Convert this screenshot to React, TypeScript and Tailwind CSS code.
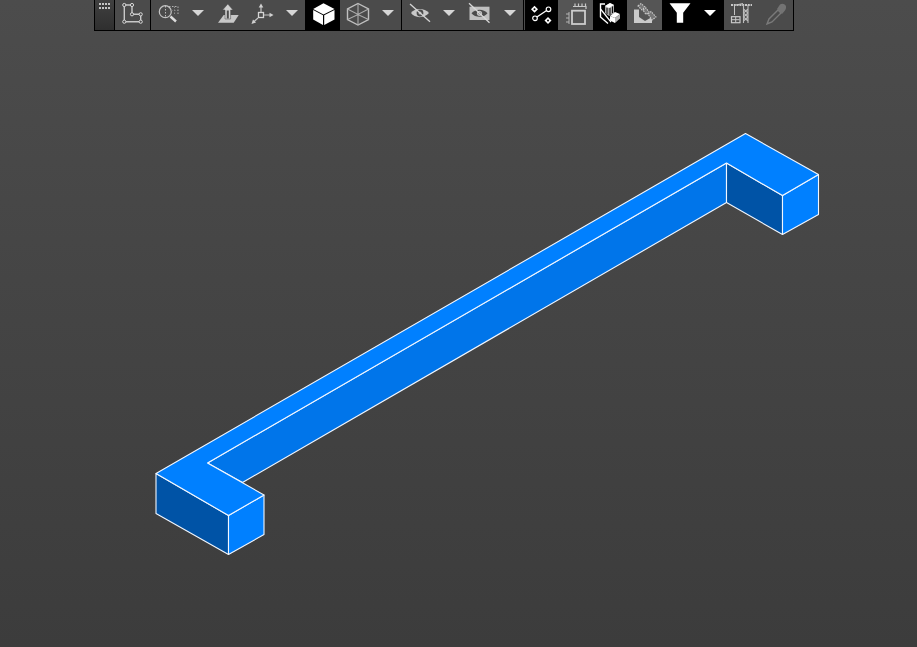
const Caret = ({ white }: { white?: boolean }) => (
  <svg width="12" height="6" viewBox="0 0 12 6" className="mt-[-4px]">
    <polygon points="0,0 12,0 6,6" fill={white ? '#ffffff' : '#d6d6d6'} />
  </svg>
)

const Icon = ({ children }: { children: React.ReactNode }) => (
  <svg width="30" height="28" viewBox="0 0 30 28" className="shrink-0">
    {children}
  </svg>
)

const PolyIcon = () => (
  <Icon>
    <path d="M6.3 5H14V14.3H22.7V21.7H6.3Z" fill="none" stroke="#c8c8c8" strokeWidth="1.4" />
    {[[6.3, 5], [14, 5], [14, 14.3], [22.7, 14.3], [22.7, 21.7], [6.3, 21.7]].map(([x, y], i) => (
      <circle key={i} cx={x} cy={y} r="1.6" fill="#4b4b4b" stroke="#d8d8d8" strokeWidth="1" />
    ))}
  </Icon>
)

const ZoomIcon = () => (
  <Icon>
    <circle cx="12.3" cy="11.7" r="6" fill="none" stroke="#c4c4c4" strokeWidth="1.2" />
    <path d="M12.5 6V17" stroke="#bdbdbd" strokeDasharray="1.5 1.5" />
    <path d="M17.5 16.5L23 21.5" stroke="#dcdcdc" strokeWidth="2.4" />
    <path d="M16 6.5H25V15" fill="none" stroke="#b0b0b0" strokeDasharray="1.5 1.5" />
    <path d="M21.5 6.5V15M18 10.5H25" fill="none" stroke="#8a8a8a" strokeDasharray="1.5 1.5" />
  </Icon>
)

const PlaneIcon = () => (
  <Icon>
    <polygon points="9.7,15 24.7,15 19.7,22.7 4,22.7" fill="#c8c8c8" />
    <path d="M13.8 4L8.6 10H11V19H16.6V10H19Z" fill="#d0d0d0" stroke="#4b4b4b" strokeWidth="0.5" />
    <rect x="12.8" y="10.5" width="2" height="8" fill="#4b4b4b" />
  </Icon>
)

const AxisIcon = () => (
  <Icon>
    <g transform="translate(-1 0)">
      <rect x="12.5" y="12.5" width="5" height="5" fill="none" stroke="#d4d4d4" strokeWidth="1.3" />
      <path d="M15 12V6M18 15H25M12 18L7 22.5" stroke="#c4c4c4" strokeWidth="1.2" />
      <polygon points="15,3.5 12.7,7.5 17.3,7.5" fill="#d0d0d0" />
      <polygon points="27.5,15 23.5,12.8 23.5,17.2" fill="#d0d0d0" />
      <polygon points="5.5,24 7,19.5 10,22.5" fill="#d0d0d0" />
    </g>
  </Icon>
)

const SolidCube = () => (
  <Icon>
    <g transform="translate(1.5 0)">
      <polygon points="14,3.3 25,9 14,14.4 3.7,9" fill="#ffffff" />
      <polygon points="3.7,10 13.5,15.2 13.5,25 3.7,19.5" fill="#ffffff" />
      <polygon points="14.7,15.2 25,10 25,19.5 14.7,25" fill="#ffffff" />
    </g>
  </Icon>
)

const WireCube = () => (
  <Icon>
    <g transform="translate(1 0)">
      <path d="M15 3.5L25.5 9V19.5L15 25L4.5 19.5V9Z" fill="none" stroke="#c0c0c0" strokeWidth="1.4" />
      <path d="M4.5 9L15 14.5L25.5 9M15 14.5V25M15 3.5V14.5M4.5 19.5L15 14.5L25.5 19.5" fill="none" stroke="#adadad" strokeWidth="1.1" />
    </g>
  </Icon>
)

const EyeOff = () => (
  <Icon>
    <g transform="translate(1.5 0)">
      <path d="M5.5 13C9 7.5 19 7.5 23.5 13C19 18.5 9 18.5 5.5 13Z" fill="#c8c8c8" />
      <circle cx="14.5" cy="13" r="3.4" fill="#4b4b4b" />
      <circle cx="14.5" cy="13" r="1.5" fill="#b0b0b0" />
      <path d="M4.5 4L24.5 21.7" stroke="#d4d4d4" strokeWidth="1.3" />
    </g>
  </Icon>
)

const EyeBoxOff = () => (
  <Icon>
    <rect x="4.5" y="6.7" width="20" height="13.3" fill="#c0c0c0" />
    <path d="M6.5 13.3C10 8.5 19 8.5 22.5 13.3C19 18 10 18 6.5 13.3Z" fill="#4b4b4b" />
    <circle cx="14.5" cy="13.3" r="2.6" fill="#c0c0c0" />
    <circle cx="14.5" cy="13.3" r="1.1" fill="#4b4b4b" />
    <path d="M4 3.3L24.5 22.7" stroke="#d8d8d8" strokeWidth="1.3" />
  </Icon>
)

const NodesIcon = () => (
  <Icon>
    <path d="M8 18.3L21.5 9.3" stroke="#ffffff" strokeWidth="1.3" />
    <circle cx="8" cy="18.3" r="2.3" fill="#000000" stroke="#ffffff" strokeWidth="1.2" />
    <circle cx="21.5" cy="9.3" r="2.3" fill="#000000" stroke="#ffffff" strokeWidth="1.2" />
    <polygon points="7.5,5.8 11,9.3 7.5,12.8 4,9.3" fill="#ffffff" />
    <circle cx="7.5" cy="9.3" r="1" fill="#000000" />
    <polygon points="21,17 24.5,20.5 21,24 17.5,20.5" fill="#ffffff" />
    <circle cx="21" cy="20.5" r="1" fill="#000000" />
  </Icon>
)

const RulerBox = () => (
  <Icon>
    <rect x="11" y="10.7" width="13" height="13.3" fill="#555555" stroke="#cccccc" strokeWidth="1.8" />
    <path d="M12 6.5H25V9M14 3.5V6.5M17.5 3.5V6.5M21 3.5V6.5M24.5 3.5V6.5" fill="none" stroke="#c8c8c8" strokeWidth="1.2" />
    <path d="M8 12V24M5 14H8M5 18H8M5 22H8" fill="none" stroke="#b4b4b4" />
  </Icon>
)

const SectionCubes = () => (
  <Icon>
    <path d="M10 4H5.5V17L13 23.5" fill="none" stroke="#ffffff" strokeWidth="1.4" />
    <path d="M5.5 9L16 22" stroke="#ffffff" strokeWidth="1.2" />
    <polygon points="10,6 15,3 19,5 19,13 14,16 10,13" fill="#a8a8a8" />
    <polygon points="10,6 15,3 19,5 14,8" fill="#ffffff" />
    <path d="M12 8V14M15 8V15M17.5 6.5V13" stroke="#000000" strokeWidth="0.9" />
    <polygon points="15,16 20,12 25,14 20,18" fill="#ffffff" />
    <polygon points="15,16 20,18 20,23 15,20.5" fill="#ffffff" />
    <polygon points="20,18 25,14 25,18.5 20,23" fill="#b4b4b4" />
  </Icon>
)

const SlopeIcon = () => (
  <Icon>
    <polygon points="4,9.5 9,9.5 9,17 15,21 22,17 22,23 4,23" fill="#cacaca" />
    <path d="M8 6L11 3.5L15 7L12 10ZM13 10L16 8L19 12L16 14.5ZM18 14L21 11.5L26 17L22 20Z" fill="#777777" stroke="#cacaca" strokeWidth="1.1" strokeDasharray="1.6 1" />
  </Icon>
)

const FilterIcon = () => (
  <Icon>
    <polygon points="4.5,3.3 25.5,3.3 18.2,12.7 18.2,22.7 11.8,22.7 11.8,12.7" fill="#ffffff" />
  </Icon>
)

const CraneIcon = () => (
  <Icon>
    <path d="M5 5H26" stroke="#c8c8c8" strokeWidth="2" strokeDasharray="2 0.8" />
    <path d="M17 3.5L10 5M8.5 5.5V15" stroke="#c4c4c4" fill="none" />
    <path d="M17.5 5V23M22 5V23M17.5 9L22 13L17.5 17L22 21M22 9L17.5 13L22 17L17.5 21" fill="none" stroke="#bcbcbc" strokeWidth="1.1" />
    <rect x="5.5" y="16.7" width="8.5" height="6" fill="#4b4b4b" stroke="#c8c8c8" strokeWidth="1.2" />
    <path d="M9.7 17V22.5M6 19.7H13.5" stroke="#c8c8c8" />
  </Icon>
)

const DropperIcon = () => (
  <Icon>
    <path d="M6 24L8 19L17 10L20 13L11 22Z" fill="none" stroke="#7a7a7a" strokeWidth="1.4" />
    <path d="M16 9L19 4.5C21 3 24.5 4 25 6.5C25.5 9 24 10.5 21 14Z" fill="#737373" />
  </Icon>
)

const Sep = () => <div className="w-px shrink-0 bg-black" />

const App = () => {
  return (
    <div className="relative h-screen w-full overflow-hidden bg-gradient-to-b from-[#4c4c4c] to-[#3c3c3c]">
      {/* model */}
      <svg width="917" height="647" viewBox="0 0 917 647" className="absolute inset-0">
        <g stroke="#f2f7ff" strokeWidth="1.1" strokeLinejoin="round">
          <polygon points="207.5,463 726.5,163 726.5,202.5 242.5,482.5" fill="#0075ea" />
          <polygon points="726.5,163 782.5,195.5 782.5,234.5 726.5,202.5" fill="#0053a6" />
          <polygon points="782.5,195.5 818.5,174.5 818.5,214.5 782.5,234.5" fill="#0080ff" />
          <polygon points="156,473.5 228.5,515.5 228.5,554.5 156,513.5" fill="#0053a6" />
          <polygon points="228.5,515.5 264,495 264,534.5 228.5,554.5" fill="#0080ff" />
          <polygon points="156,473.5 745.5,133.5 818.5,174.5 782.5,195.5 726.5,163 207.5,463 264,495 228.5,515.5" fill="#0080ff" />
        </g>
      </svg>

      {/* toolbar */}
      <div className="relative ml-[94px] flex h-[31px] w-[700px] border-x border-b border-black bg-[#4b4b4b]">
        <div className="flex w-[19px] shrink-0 justify-center bg-gradient-to-b from-[#404040] to-[#2f2f2f] pt-[3px]">
          <div className="grid h-[6px] grid-cols-4 gap-x-px gap-y-px">
            {[0, 1, 2, 3, 4, 5, 6, 7].map((i) => (
              <div key={i} className="h-[2px] w-[2px] bg-[#c4c4c4]" />
            ))}
          </div>
        </div>
        <Sep />
        <div className="flex w-[35px] shrink-0 items-start justify-center"><PolyIcon /></div>
        <Sep />
        <div className="flex w-[34px] shrink-0 items-start justify-center"><ZoomIcon /></div>
        <div className="flex w-[26px] shrink-0 items-center justify-center"><Caret /></div>
        <div className="flex w-[35px] shrink-0 items-start justify-center"><PlaneIcon /></div>
        <div className="flex w-[32px] shrink-0 items-start justify-center"><AxisIcon /></div>
        <div className="flex w-[27px] shrink-0 items-center justify-center"><Caret /></div>
        <Sep />
        <div className="flex w-[34px] shrink-0 items-start justify-center bg-black"><SolidCube /></div>
        <div className="flex w-[34px] shrink-0 items-start justify-center"><WireCube /></div>
        <div className="flex w-[27px] shrink-0 items-center justify-center"><Caret /></div>
        <Sep />
        <div className="flex w-[34px] shrink-0 items-start justify-center"><EyeOff /></div>
        <div className="flex w-[26px] shrink-0 items-center justify-center"><Caret /></div>
        <div className="flex w-[35px] shrink-0 items-start justify-center"><EyeBoxOff /></div>
        <div className="flex w-[26px] shrink-0 items-center justify-center"><Caret /></div>
        <Sep />
        <div className="w-px shrink-0" />
        <div className="flex w-[33px] shrink-0 items-start justify-center bg-black"><NodesIcon /></div>
        <div className="flex w-[35px] shrink-0 items-start justify-center bg-[#555555]"><RulerBox /></div>
        <div className="flex w-[34px] shrink-0 items-start justify-center bg-black"><SectionCubes /></div>
        <div className="flex w-[35px] shrink-0 items-start justify-center bg-[#555555]"><SlopeIcon /></div>
        <Sep />
        <div className="flex w-[34px] shrink-0 items-start justify-center bg-black"><FilterIcon /></div>
        <div className="flex w-[26px] shrink-0 items-center justify-center bg-black"><Caret white /></div>
        <Sep />
        <div className="flex w-[34px] shrink-0 items-start justify-center"><CraneIcon /></div>
        <div className="flex w-[35px] shrink-0 items-start justify-center"><DropperIcon /></div>
      </div>
    </div>
  )
}

export default App
